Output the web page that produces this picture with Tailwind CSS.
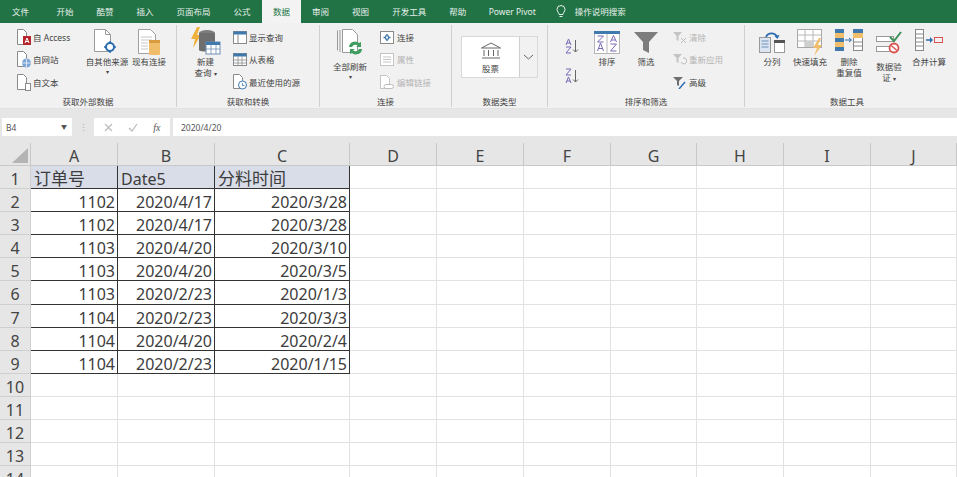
<!DOCTYPE html>
<html lang="zh-CN">
<head>
<meta charset="UTF-8">
<title>数据 - Excel</title>
<script src="https://cdn.jsdelivr.net/npm/@tailwindcss/browser@4"></script>
</head>
<body class="w-[957px] h-[477px] overflow-hidden bg-white font-['Noto_Sans','Noto_Sans_CJK_SC',sans-serif] text-[#444] text-[8.5px] leading-[11px]">

<!-- tabs -->
<div class="flex items-center h-[23px] bg-[#217346] text-[#e6f0ea]">
  <div class="ml-[12px] mr-[16px]">文件</div>
  <div class="px-[11.5px]">开始</div>
  <div class="px-[11.5px]">酷赞</div>
  <div class="px-[11.5px]">插入</div>
  <div class="px-[11.5px]">页面布局</div>
  <div class="px-[11.5px]">公式</div>
  <div class="flex items-center justify-center w-[39px] h-[23px] bg-[#f3f3f3] text-[#217346]">数据</div>
  <div class="pl-[11px] pr-[11.5px]">审阅</div>
  <div class="px-[11.5px]">视图</div>
  <div class="px-[11.5px]">开发工具</div>
  <div class="px-[11.5px]">帮助</div>
  <div class="pl-[11px] pr-[10px]">Power Pivot</div>
  <div class="flex items-center gap-[9px] pl-[10px]">
    <svg width="10" height="13" viewBox="0 0 10 13" fill="none" stroke="#e6f0ea" stroke-width="1"><path d="M3 9.5C3 7.5 1 6.8 1 4.5a4 4 0 0 1 8 0C9 6.800 7 7.500 7 9.500zM3.500 11.500h3"/></svg>
    <span>操作说明搜索</span>
  </div>
</div>

<!-- ribbon -->
<div class="flex h-[86px] pt-[2px] bg-[#f1f1f1] border-b border-[#e2e2e2]">

  <!-- 获取外部数据 -->
  <div class="flex flex-col w-[177px] h-[82px] border-r border-[#d0d0d0]">
    <div class="flex h-[71px] pl-[17px]">
      <div class="flex flex-col w-[68px] pt-[1px]">
        <div class="flex items-center gap-[2px] h-[22.500px]">
          <svg width="14" height="17" viewBox="0 0 14 17"><path d="M.5.500h6l3 3v12h-9z" fill="#fff" stroke="#8a8a8a"/><rect x="6" y="7" width="8" height="9" fill="#b7282e"/><path d="M8 14l2-5 2 5M8.800 12.500h2.400" stroke="#fff" fill="none"/></svg>
          <span>自 Access</span>
        </div>
        <div class="flex items-center gap-[2px] h-[22.500px]">
          <svg width="14" height="17" viewBox="0 0 14 17"><path d="M.5.500h6l3 3v12h-9z" fill="#fff" stroke="#8a8a8a"/><circle cx="9.500" cy="12" r="4.500" fill="#7ea6d8"/><path d="M5 12h9M9.500 7.500v9" stroke="#fff" stroke-width=".7"/></svg>
          <span>自网站</span>
        </div>
        <div class="flex items-center gap-[2px] h-[22.500px]">
          <svg width="14" height="17" viewBox="0 0 14 17"><path d="M.5.500h6l3 3v12h-9z" fill="#fff" stroke="#8a8a8a"/><rect x="8.500" y="9.500" width="5" height="7" fill="#fff" stroke="#8a8a8a"/></svg>
          <span>自文本</span>
        </div>
      </div>
      <div class="flex flex-col items-center w-[44px] pt-[4px]">
        <div class="flex h-[27px] items-start">
          <svg width="30" height="27" viewBox="0 0 30 27"><path d="M2.500.500h11l5 5v17h-16z" fill="#fff" stroke="#9a9a9a"/><path d="M13.500.500v5h5" fill="none" stroke="#9a9a9a"/><path d="M18 12v12M12 18h12" stroke="#2b6cb0" stroke-width="1.500"/><circle cx="18" cy="18" r="4" fill="#fff" stroke="#2b6cb0" stroke-width="2"/></svg>
        </div>
        <span>自其他来源</span>
        <span class="text-[6px]">▾</span>
      </div>
      <div class="flex flex-col items-center w-[36px] ml-[2px] pt-[4px]">
        <div class="flex h-[27px] items-start">
          <svg width="28" height="27" viewBox="0 0 28 27"><path d="M3.500.500h12l5 5v19h-17z" fill="#fff" stroke="#a0a0a0"/><path d="M6 8h11M6 11h11M6 14h7M6 17h7M6 20h7" stroke="#c8c8c8"/><rect x="14" y="11" width="11" height="15" rx="1.500" fill="#f0bd6b"/><rect x="14" y="11" width="11" height="3" fill="#d99d3f"/></svg>
        </div>
        <span>现有连接</span>
      </div>
    </div>
    <div class="h-[11px] text-center">获取外部数据</div>
  </div>

  <!-- 获取和转换 -->
  <div class="flex flex-col w-[143px] h-[82px] border-r border-[#d0d0d0]">
    <div class="flex h-[71px]">
      <div class="flex flex-col items-center w-[56px] pl-[1px] pt-[2px]">
        <div class="flex h-[29px] items-start">
          <svg width="32" height="29" viewBox="0 0 32 29"><path d="M7 0L1 12h4l-2 9 8-13H7l3-8z" fill="#f0b13c"/><ellipse cx="17" cy="6" rx="8" ry="3" fill="#7d7d7d"/><path d="M9 6v17c0 2 16 2 16 0V6z" fill="#6e6e6e"/><rect x="16" y="15" width="14" height="12" fill="#fff" stroke="#6c8fb5"/><rect x="16" y="15" width="14" height="3" fill="#3f79ad"/><path d="M16 22h14M21 18v9M26 18v9" stroke="#6c8fb5" stroke-width=".8"/></svg>
        </div>
        <span>新建</span>
        <span>查询 <span class="text-[6px]">▾</span></span>
      </div>
      <div class="flex flex-col pt-[1px]">
        <div class="flex items-center gap-[2px] h-[22.500px]">
          <svg width="14" height="13" viewBox="0 0 14 13"><rect x=".5" y=".5" width="13" height="12" fill="#fff" stroke="#8a8a8a"/><rect x=".5" y=".5" width="13" height="3" fill="#3f79ad"/><path d="M5 3.500v9" stroke="#8a8a8a"/></svg>
          <span>显示查询</span>
        </div>
        <div class="flex items-center gap-[2px] h-[22.500px]">
          <svg width="14" height="13" viewBox="0 0 14 13"><rect x=".5" y=".5" width="13" height="12" fill="#fff" stroke="#8a8a8a"/><rect x=".5" y=".5" width="13" height="3" fill="#3f79ad"/><path d="M1 7h12M1 10h12M5 3.500v9M9 3.500v9" stroke="#8a8a8a" stroke-width=".8"/></svg>
          <span>从表格</span>
        </div>
        <div class="flex items-center gap-[2px] h-[22.500px]">
          <svg width="14" height="16" viewBox="0 0 14 16"><path d="M.5.500h6l3 3v11h-9z" fill="#fff" stroke="#8a8a8a"/><circle cx="9.500" cy="11" r="4" fill="#fff" stroke="#3f79ad"/><path d="M9.500 9v2.500h2" fill="none" stroke="#3f79ad" stroke-width=".8"/></svg>
          <span>最近使用的源</span>
        </div>
      </div>
    </div>
    <div class="h-[11px] text-center">获取和转换</div>
  </div>

  <!-- 连接 -->
  <div class="flex flex-col w-[132px] h-[82px] border-r border-[#d0d0d0]">
    <div class="flex h-[71px]">
      <div class="flex flex-col items-center w-[60px] pt-[4px]">
        <div class="flex h-[32px] items-start">
          <svg width="30" height="28" viewBox="0 0 30 28"><path d="M2.500 1.500v20M5 1v22" stroke="#9a9a9a" fill="none"/><path d="M7.500.500h10l5 5v18h-15z" fill="#fff" stroke="#9a9a9a"/><path d="M14 18a6 6 0 0 1 10-4l2-1v5h-5l2-1.500a4 4 0 0 0-6 1.500zM27 20a6 6 0 0 1-10 4l-2 1v-5h5l-2 1.500a4 4 0 0 0 6-1.500z" fill="#3e9c5f"/></svg>
        </div>
        <span>全部刷新</span>
        <span class="text-[6px]">▾</span>
      </div>
      <div class="flex flex-col pt-[1px]">
        <div class="flex items-center gap-[3px] h-[22.500px]">
          <svg width="14" height="13" viewBox="0 0 14 13"><rect x=".5" y=".5" width="13" height="12" fill="#fff" stroke="#8a8a8a"/><path d="M7 3v7M3.500 6.500h7" stroke="#3f79ad" stroke-width="1.500"/><rect x="5.500" y="5" width="3" height="3" fill="#fff" stroke="#3f79ad"/></svg>
          <span>连接</span>
        </div>
        <div class="flex items-center gap-[3px] h-[22.500px] text-[#b4b4b4]">
          <svg width="14" height="13" viewBox="0 0 14 13"><rect x=".5" y=".5" width="13" height="12" fill="#fff" stroke="#c4c4c4"/><path d="M3 4h8M3 6.500h8M3 9h8" stroke="#c4c4c4"/></svg>
          <span>属性</span>
        </div>
        <div class="flex items-center gap-[3px] h-[22.500px] text-[#b4b4b4]">
          <svg width="14" height="15" viewBox="0 0 14 15"><path d="M.5.500h6l3 3v10h-9z" fill="#fff" stroke="#c4c4c4"/><rect x="4" y="9.500" width="9.500" height="4" rx="2" fill="#fff" stroke="#bcbcbc"/></svg>
          <span>编辑链接</span>
        </div>
      </div>
    </div>
    <div class="h-[11px] text-center">连接</div>
  </div>

  <!-- 数据类型 -->
  <div class="flex flex-col w-[96px] h-[82px] border-r border-[#d0d0d0]">
    <div class="flex h-[71px] pl-[9px] pt-[11px]">
      <div class="flex w-[77px] h-[42px] bg-white border border-[#d8d8d8]">
        <div class="flex flex-col items-center w-[57px] pt-[5px] gap-[3px]">
          <svg width="22" height="18" viewBox="0 0 22 18" fill="none" stroke="#666"><path d="M1.500 6L11 1l9.500 5zM4 8v6M8.500 8v6M13.500 8v6M18 8v6M2 16h18" stroke-width="1"/></svg>
          <span>股票</span>
        </div>
        <div class="flex items-center justify-center flex-1 bg-[#f1f1f1] border-l border-[#cfcfcf]">
          <svg width="11" height="6" viewBox="0 0 11 6" fill="none" stroke="#666"><path d="M1 1l4.500 4L10 1"/></svg>
        </div>
      </div>
    </div>
    <div class="h-[11px] text-center">数据类型</div>
  </div>

  <!-- 排序和筛选 -->
  <div class="flex flex-col w-[197px] h-[82px] border-r border-[#d0d0d0]">
    <div class="flex h-[71px]">
      <div class="flex flex-col items-center w-[40px] pl-[7px] pt-[13px] gap-[14px]">
        <svg width="14" height="16" viewBox="0 0 14 16" fill="none"><path d="M1 7l2.500-6L6 7M1.800 5h3.400" stroke="#7a68b5"/><path d="M1 9h5l-5 6h5" stroke="#7a68b5"/><path d="M10.500 2v12M8 11.500l2.500 2.500 2.500-2.500" stroke="#666"/></svg>
        <svg width="14" height="16" viewBox="0 0 14 16" fill="none"><path d="M1 1h5l-5 6h5" stroke="#7a68b5"/><path d="M1 15l2.500-6L6 15M1.800 13h3.400" stroke="#7a68b5"/><path d="M10.500 2v12M8 11.500l2.500 2.500 2.500-2.500" stroke="#666"/></svg>
      </div>
      <div class="flex flex-col items-center w-[38px] pt-[6px]">
        <div class="flex h-[25px] items-start">
          <svg width="26" height="23" viewBox="0 0 26 23"><rect x=".5" y=".5" width="25" height="22" fill="#fff" stroke="#b5b5b5"/><rect x="0" y="0" width="26" height="3" fill="#3f79ad"/><path d="M13 3v20" stroke="#b5b5b5"/><path d="M3.500 5h6l-6 6h6M3.500 20l3-8 3 8M4.500 17.500h4M16.500 11l3-6.500 3 6.500M17.500 9h4M16.500 13h6l-6 7h6" fill="none" stroke="#7a68b5"/></svg>
        </div>
        <span>排序</span>
      </div>
      <div class="flex flex-col items-center w-[40px] pt-[6px]">
        <div class="flex h-[25px] items-start">
          <svg width="24" height="23" viewBox="0 0 24 23"><path d="M0 1h24l-9 10v11l-6-3v-8z" fill="#7d7d7d"/></svg>
        </div>
        <span>筛选</span>
      </div>
      <div class="flex flex-col pl-[7px] pt-[1px]">
        <div class="flex items-center gap-[2px] h-[22.500px] text-[#b4b4b4]">
          <svg width="14" height="13" viewBox="0 0 14 13"><path d="M0 1h9L5.500 5v5l-2-1V5z" fill="#c4c4c4"/><path d="M8 7l5 5M13 7l-5 5" stroke="#bbb"/></svg>
          <span>清除</span>
        </div>
        <div class="flex items-center gap-[2px] h-[22.500px] text-[#b4b4b4]">
          <svg width="14" height="13" viewBox="0 0 14 13"><path d="M0 1h9L5.500 5v5l-2-1V5z" fill="#c4c4c4"/><path d="M8 9a3 3 0 1 0 2-4" fill="none" stroke="#bbb"/></svg>
          <span>重新应用</span>
        </div>
        <div class="flex items-center gap-[2px] h-[22.500px]">
          <svg width="14" height="13" viewBox="0 0 14 13"><path d="M0 1h10L6 5v5L4 9V5z" fill="#6e6e6e"/><path d="M6 13l6-7" stroke="#2b6cb0" stroke-width="1.400"/></svg>
          <span>高级</span>
        </div>
      </div>
    </div>
    <div class="h-[11px] text-center">排序和筛选</div>
  </div>

  <!-- 数据工具 -->
  <div class="flex flex-col flex-1 h-[82px]">
    <div class="flex h-[71px]">
      <div class="flex flex-col items-center w-[46px] ml-[4px] pt-[5px]">
        <div class="flex h-[26px] items-start">
          <svg width="26" height="23" viewBox="0 0 26 23"><rect x=".5" y="7.500" width="11" height="15" fill="#dce6f2" stroke="#999"/><path d="M2.500 11h7M2.500 14h7M2.500 17h7" stroke="#6d8fb8"/><rect x="15.500" y="10.500" width="10" height="12" fill="#fff" stroke="#999"/><rect x="15" y="10" width="11" height="3" fill="#555"/><path d="M7 7a6 6 0 0 1 11 0" fill="none" stroke="#2b6cb0" stroke-width="1.800"/><path d="M15.500 6l3 3 2-4z" fill="#2b6cb0"/></svg>
        </div>
        <span>分列</span>
      </div>
      <div class="flex flex-col items-center w-[30px] pt-[4px]">
        <div class="flex h-[27px] items-start">
          <svg width="26" height="27" viewBox="0 0 26 27"><rect x=".5" y=".5" width="24" height="18" fill="#fff" stroke="#a8a8a8"/><path d="M1 6h23M1 12h23M8 1v18M16 1v18" stroke="#a8a8a8" stroke-width=".8"/><rect x="8" y="12" width="9" height="6" fill="#cfcfcf"/><path d="M22 9l-6 10h4l-3 8 8-11h-4l3-7z" fill="#f0bd6b"/></svg>
        </div>
        <span class="whitespace-nowrap">快速填充</span>
      </div>
      <div class="flex flex-col items-center w-[48px] pt-[4px]">
        <div class="flex h-[27px] items-start">
          <svg width="28" height="23" viewBox="0 0 28 23"><rect x="0" y="0" width="9" height="22" fill="#3f79ad"/><rect x="0" y="4" width="9" height="5" fill="#f0bd6b"/><rect x="0" y="13" width="9" height="5" fill="#f0bd6b"/><rect x="18.500" y=".5" width="9" height="21" fill="#fff" stroke="#888"/><rect x="18" y="0" width="10" height="4" fill="#3f79ad"/><rect x="18" y="4" width="10" height="5" fill="#f0bd6b"/><path d="M19 13h8M19 17h8" stroke="#888"/><path d="M10 11h6M14 9l2.500 2-2.500 2" stroke="#2b6cb0" fill="none"/></svg>
        </div>
        <span>删除</span>
        <span>重复值</span>
      </div>
      <div class="flex flex-col items-center w-[32px] pt-[6px]">
        <div class="flex h-[30px] items-start">
          <svg width="26" height="23" viewBox="0 0 26 23" fill="none"><rect x=".5" y="5.500" width="17" height="5" fill="#fff" stroke="#999"/><rect x=".5" y="15.500" width="17" height="5" fill="#fff" stroke="#999"/><path d="M14 6l4 4 7-9" stroke="#3e8f5a" stroke-width="2"/><circle cx="18" cy="17" r="4.500" fill="#fff" stroke="#d9534f" stroke-width="1.800"/><path d="M15 14.500l6 5" stroke="#d9534f" stroke-width="1.500"/></svg>
        </div>
        <span>数据验</span>
        <span>证 <span class="text-[6px]">▾</span></span>
      </div>
      <div class="flex flex-col items-center w-[48px] pt-[4px]">
        <div class="flex h-[27px] items-start">
          <svg width="28" height="23" viewBox="0 0 28 23" fill="none"><rect x=".5" y=".5" width="8" height="21" fill="#fff" stroke="#888"/><path d="M1 5h7M1 9h7M1 13h7M1 17h7" stroke="#888"/><path d="M11 11h6" stroke="#2b6cb0" stroke-width="1.500"/><path d="M15 8l3 3-3 3z" fill="#2b6cb0"/><rect x="19.500" y="8.500" width="8" height="5" stroke="#d9534f"/></svg>
        </div>
        <span class="whitespace-nowrap">合并计算</span>
      </div>
    </div>
    <div class="h-[11px] text-center pr-[8px]">数据工具</div>
  </div>
</div>

<!-- formula bar -->
<div class="flex items-start h-[34px] pt-[9px] bg-[#e6e6e6] text-[#555]">
  <div class="flex items-center justify-between w-[70px] h-[18px] ml-[2px] pl-[4px] pr-[5px] bg-white">
    <span>B4</span>
    <span class="text-[6px]">▼</span>
  </div>
  <div class="flex items-center justify-center w-[22px] h-[18px] text-[#aaa]">⋮</div>
  <div class="flex items-center justify-around w-[76px] h-[18px] px-[2px] bg-white">
    <svg width="9" height="9" viewBox="0 0 9 9" stroke="#bbb" stroke-width="1.200"><path d="M1 1l7 7M8 1L1 8"/></svg>
    <svg width="10" height="9" viewBox="0 0 10 9" fill="none" stroke="#bbb" stroke-width="1.200"><path d="M1 5l3 3 5-7"/></svg>
    <span class="font-['Liberation_Serif',serif] italic text-[10px] text-[#555]">fx</span>
  </div>
  <div class="flex items-center flex-1 h-[18px] ml-[3px] pl-[8px] bg-white">2020/4/20</div>
</div>

<!-- sheet -->
<div id="sheet" class="grid grid-cols-[31px_87px_97px_135px_87px_87px_87px_86px_87px_87px_86px] grid-rows-[23px] auto-rows-[23.1px] text-[16px] leading-[26px] text-[#3c3c3c]"></div>

<script>
const rows = [
  ['订单号', 'Date5', '分料时间'],
  ['1102', '2020/4/17', '2020/3/28'],
  ['1102', '2020/4/17', '2020/3/28'],
  ['1103', '2020/4/20', '2020/3/10'],
  ['1103', '2020/4/20', '2020/3/5'],
  ['1103', '2020/2/23', '2020/1/3'],
  ['1104', '2020/2/23', '2020/3/3'],
  ['1104', '2020/4/20', '2020/2/4'],
  ['1104', '2020/2/23', '2020/1/15'],
]
const sheet = document.getElementById('sheet')
let html = '<div class="relative bg-[#e6e6e6] border-r border-b border-[#c8c8c8]"><svg class="absolute left-[12px] top-[5px]" width="16" height="15" viewBox="0 0 16 15"><path d="M16 0v15H0z" fill="#b4b4b4"/></svg></div>'
for (const c of 'ABCDEFGHIJ') {
  html += `<div class="text-center bg-[#e6e6e6] border-r border-b border-[#c8c8c8] text-[#444]">${c}</div>`
}
for (let r = 1; r <= 14; r++) {
  html += `<div class="text-center bg-[#e6e6e6] border-r border-b border-[#cfcfcf] text-[#444]">${r}</div>`
  for (let c = 0; c < 10; c++) {
    const row = rows[r - 1]
    if (row && c < 3) {
      if (r == 1) html += `<div class="pl-[3px] whitespace-nowrap bg-[#d9dde8] border-r border-b border-[#333] ${c == 1 ? '' : 'text-[17px]'}">${row[c]}</div>`
      else html += `<div class="pr-[2px] text-right bg-white border-r border-b border-[#333]">${row[c]}</div>`
    } else {
      html += '<div class="bg-white border-r border-b border-[#e2e2e2]"></div>'
    }
  }
}
sheet.innerHTML = html
</script>
</body>
</html>
